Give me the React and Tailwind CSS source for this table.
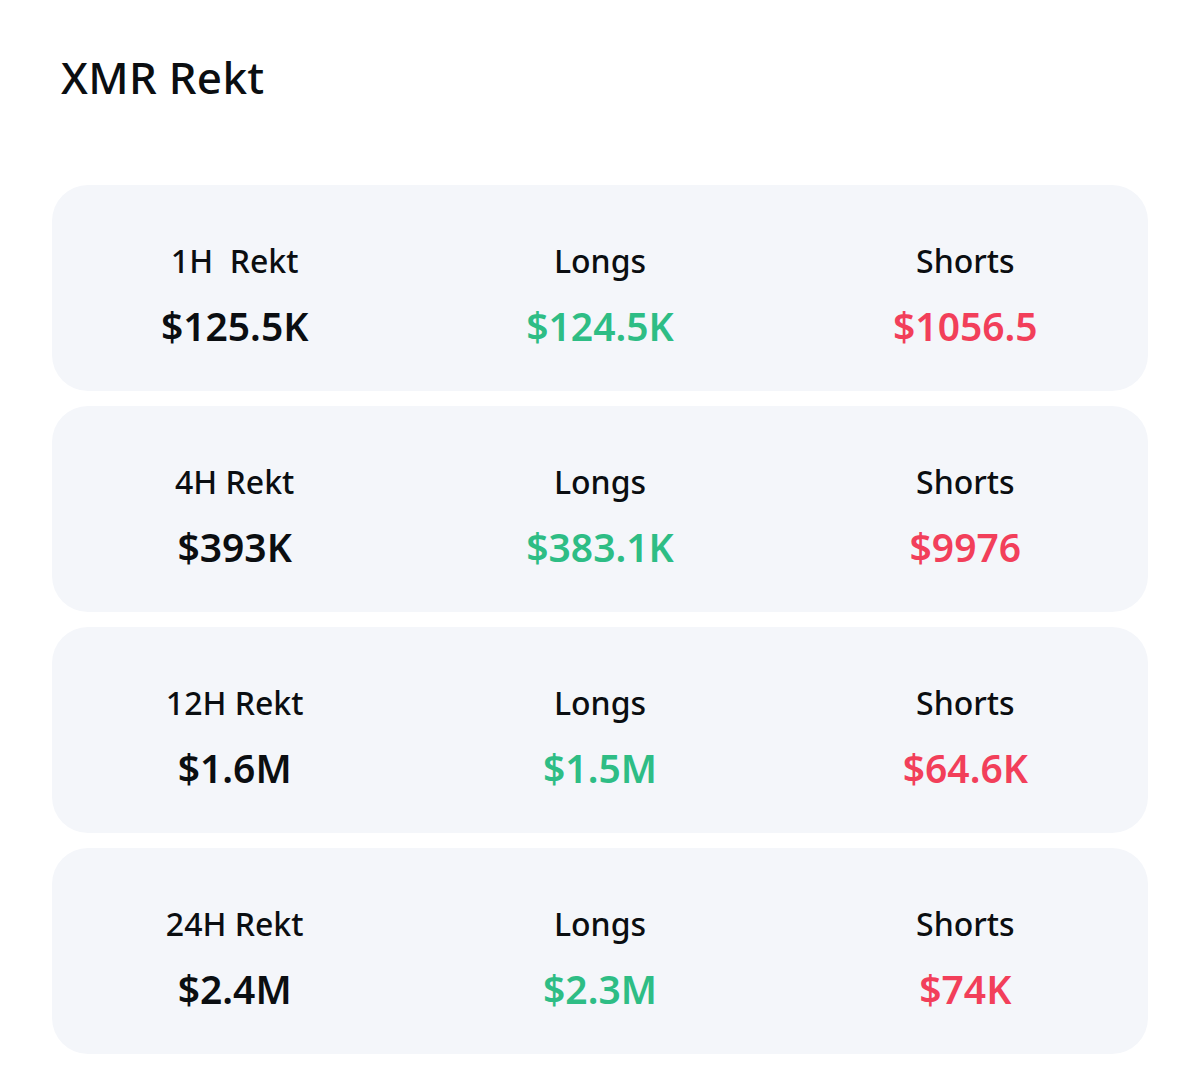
export default function App() {
  const rows = [
    { label: "1H\u00a0 Rekt", total: "$125.5K", longs: "$124.5K", shorts: "$1056.5" },
    { label: "4H Rekt", total: "$393K", longs: "$383.1K", shorts: "$9976" },
    { label: "12H Rekt", total: "$1.6M", longs: "$1.5M", shorts: "$64.6K" },
    { label: "24H Rekt", total: "$2.4M", longs: "$2.3M", shorts: "$74K" },
  ];
  return (
    <div className="w-[1200px] h-[1073px] bg-white text-[#0b0e11]" style={{ fontFamily: '"Noto Sans", "DejaVu Sans", sans-serif' }}>
      <div className="pl-[61px] pt-[49px] h-[185px]">
        <h1 className="text-[44px] leading-[56px] font-medium tracking-[0.3px]">XMR Rekt</h1>
      </div>
      <div className="px-[52px] flex flex-col gap-[15px]">
        {rows.map((r, i) => (
          <div key={i} className="h-[206px] rounded-[36px] bg-[#f4f6fa] grid grid-cols-3 items-center pt-[16px]">
            <Cell label={r.label} value={r.total} color="text-[#0b0e11]" />
            <Cell label="Longs" value={r.longs} color="text-[#2ebd85]" />
            <Cell label="Shorts" value={r.shorts} color="text-[#f23f5a]" />
          </div>
        ))}
      </div>
    </div>
  );
}

function Cell({ label, value, color }) {
  return (
    <div className="flex flex-col items-center">
      <div className="text-[32px] leading-[40px] font-medium">{label}</div>
      <div className={`text-[39px] leading-[50px] font-semibold mt-[20px] ${color}`}>{value}</div>
    </div>
  );
}
